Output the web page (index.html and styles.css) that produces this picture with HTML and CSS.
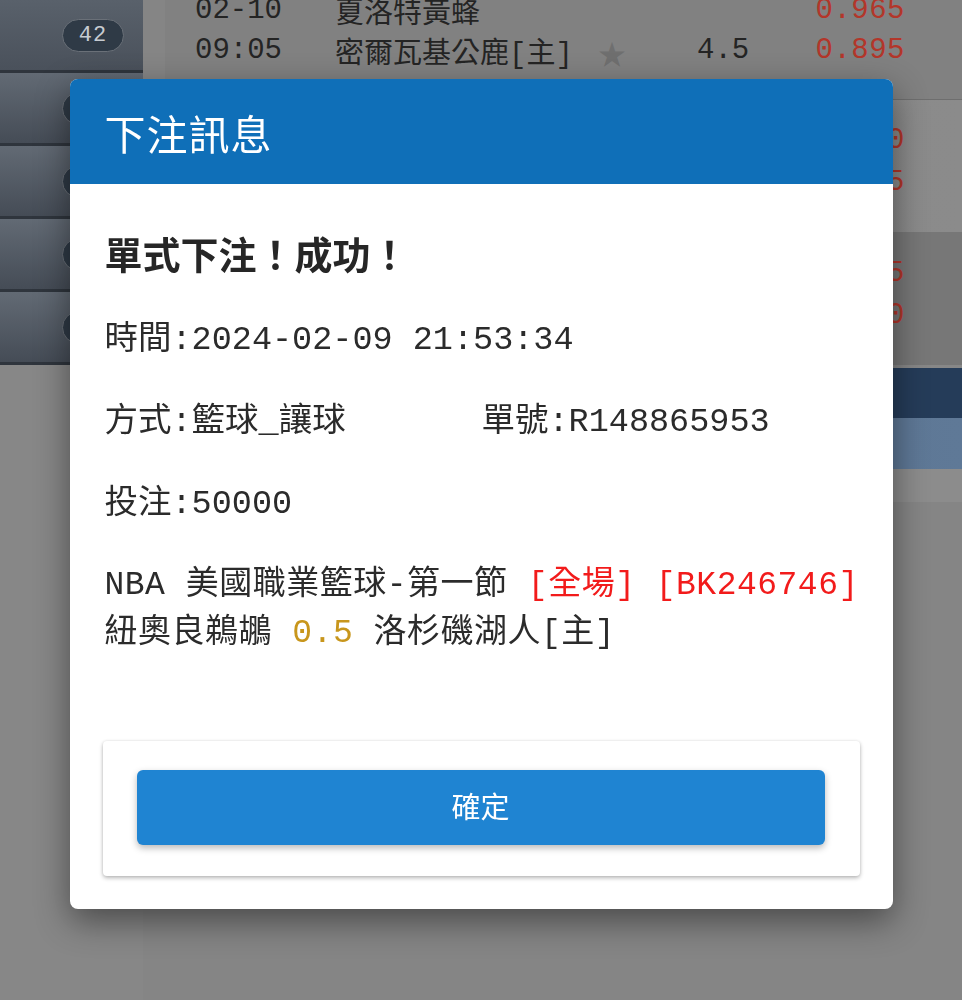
FILE: index.html
```html
<!DOCTYPE html>
<html lang="zh-Hant">
<head>
    <meta charset="UTF-8">
    <meta name="viewport" content="width=device-width, initial-scale=1.0">
    <title>下注訊息</title>
    <link rel="stylesheet" href="styles.css">
</head>
<body>
    <div class="page">
        <!-- Sidebar menu -->
        <aside class="sidebar">
            <div class="side-item"><span class="badge">42</span></div>
            <div class="side-item"><span class="badge"></span></div>
            <div class="side-item"><span class="badge"></span></div>
            <div class="side-item"><span class="badge"></span></div>
            <div class="side-item"><span class="badge"></span></div>
        </aside>
        <div class="gutter"></div>

        <!-- Game list -->
        <main class="games">
            <div class="game game-first">
                <div class="line">
                    <span class="time">02-10</span>
                    <span class="team">夏洛特黃蜂</span>
                    <span class="star"></span>
                    <span class="hdp"></span>
                    <span class="odds">0.965</span>
                </div>
                <div class="line">
                    <span class="time">09:05</span>
                    <span class="team">密爾瓦基公鹿[主]</span>
                    <span class="star">&#9733;</span>
                    <span class="hdp">4.5</span>
                    <span class="odds">0.895</span>
                </div>
            </div>
            <div class="game game-light">
                <div class="line"><span class="odds">0.930</span></div>
                <div class="line"><span class="odds">0.925</span></div>
            </div>
            <div class="game game-dark">
                <div class="line"><span class="odds">0.875</span></div>
                <div class="line"><span class="odds">0.980</span></div>
            </div>
            <div class="league-bar"></div>
            <div class="sub-bar"></div>
            <div class="spacer-bar"></div>
            <div class="game game-rest"></div>
        </main>
    </div>

    <!-- Bet result dialog -->
    <div class="overlay">
        <div class="modal">
            <div class="modal-header">
                <h1 class="modal-title">下注訊息</h1>
            </div>
            <div class="modal-body">
                <h2 class="result">單式下注！成功！</h2>
                <p class="info">時間:2024-02-09 21:53:34</p>
                <div class="info info-row">
                    <span>方式:籃球_讓球</span>
                    <span>單號:R148865953</span>
                </div>
                <p class="info">投注:50000</p>
                <p class="info match">
                    NBA 美國職業籃球-第一節 <span class="red">[全場]</span> <span class="red">[BK246746]</span><br>
                    紐奧良鵜鶘 <span class="gold">0.5</span> 洛杉磯湖人[主]
                </p>
            </div>
            <div class="modal-footer">
                <div class="footer-card">
                    <button type="button" class="confirm-btn">確定</button>
                </div>
            </div>
        </div>
    </div>
</body>
</html>
```

FILE: styles.css
```css
body {
    margin: 0;
    background-color: #878787;
    font-family: "Liberation Mono", "Noto Sans CJK TC", monospace;
    overflow: hidden;
    height: 1000px;
}
.page {
    display: flex;
    height: 100%;
}

/* sidebar */
.sidebar {
    width: 143px;
    flex-shrink: 0;
    align-self: flex-start;
}
.side-item {
    height: 70px;
    border-bottom: 3px solid #2f353d;
    background: linear-gradient(#626a74, #454c56);
    display: flex;
    align-items: center;
    justify-content: flex-end;
    padding-right: 19px;
}
.side-item:first-child {
    background: linear-gradient(#59616b, #4a515b);
}
.badge {
    width: 60px;
    height: 31px;
    border-radius: 17px;
    background-color: #2f3a46;
    border: 1px solid #6a7078;
    color: #c6cbd1;
    font-size: 22px;
    display: flex;
    align-items: center;
    justify-content: center;
    letter-spacing: 1px;
}
.gutter {
    width: 22px;
    flex-shrink: 0;
    background-color: #858585;
}

/* game list */
.games {
    flex: 1;
    display: flex;
    flex-direction: column;
}
.game {
    padding: 0 57px 0 30px;
    font-size: 29px;
    color: #242424;
}
.line {
    display: flex;
    align-items: center;
    height: 42px;
}
.time {
    width: 140px;
}
.team {
    width: 263px;
}
.star {
    width: 99px;
    color: #6f6f6f;
    font-size: 28px;
    padding-top: 6px;
}
.hdp {
    flex: 1;
}
.odds {
    margin-left: auto;
    color: #b3362a;
    letter-spacing: 0.5px;
}
.game-first {
    height: 110px;
    margin-top: -10px;
    box-sizing: border-box;
    background-color: #818181;
    border-bottom: 1px solid #6e6e6e;
}
.game-first .line {
    height: 40px;
}
.game-light {
    height: 132px;
    box-sizing: border-box;
    padding-top: 19px;
    background: linear-gradient(90deg, #868686, #8b8b8b);
}
.game-dark {
    height: 133px;
    box-sizing: border-box;
    padding-top: 20px;
    background-color: #777;
}
.league-bar {
    height: 50px;
    margin-top: 3px;
    background-color: #253c59;
}
.sub-bar {
    height: 51px;
    background: linear-gradient(90deg, #536b89, #5f7997);
}
.spacer-bar {
    height: 33px;
    background-color: #8c8c8c;
}
.game-rest {
    flex: 1;
    background-color: #858585;
}

/* dialog */
.overlay {
    position: fixed;
    inset: 0;
    display: flex;
    justify-content: center;
    align-items: flex-start;
    padding-top: 79px;
}
.modal {
    width: 823px;
    background-color: #fff;
    border-radius: 8px;
    overflow: hidden;
    box-shadow: 0 12px 34px rgba(0, 0, 0, 0.45);
}
.modal-header {
    height: 105px;
    background-color: #0f6fb8;
    display: flex;
    align-items: center;
    padding: 0 35px;
}
.modal-title {
    margin: 0;
    color: #fff;
    font-family: "Noto Sans CJK TC", sans-serif;
    font-weight: 400;
    font-size: 41px;
    letter-spacing: 1px;
}
.modal-body {
    padding: 46px 20px 0 35px;
    display: flex;
    flex-direction: column;
    gap: 34px;
    color: #2b2b2b;
}
.result {
    margin: 0 0 6px;
    font-family: "Noto Sans CJK TC", sans-serif;
    font-size: 38px;
    line-height: 46px;
    font-weight: 700;
    color: #262626;
}
.info {
    margin: 0;
    font-size: 33.5px;
    line-height: 48px;
    white-space: nowrap;
}
.info-row {
    display: grid;
    grid-template-columns: 377px 1fr;
}
.match {
    height: 96px;
    margin-bottom: 83px;
    font-size: 33px;
    letter-spacing: 0.5px;
}
.red {
    color: #f21b1b;
}
.gold {
    color: #c8961c;
}
.modal-footer {
    padding: 0 33px 33px;
}
.footer-card {
    background-color: #fff;
    border-radius: 4px;
    box-shadow: 0 2px 4px rgba(0, 0, 0, 0.28), 0 0 3px rgba(0, 0, 0, 0.08);
    padding: 29px 35px 31px 34px;
}
.confirm-btn {
    display: block;
    width: 100%;
    height: 75px;
    border: none;
    border-radius: 6px;
    background-color: #1f84d2;
    color: #fff;
    font-family: "Noto Sans CJK TC", sans-serif;
    font-size: 29px;
    padding-bottom: 6px;
    box-shadow: 0 3px 7px rgba(0, 0, 0, 0.28);
    cursor: pointer;
}
```
